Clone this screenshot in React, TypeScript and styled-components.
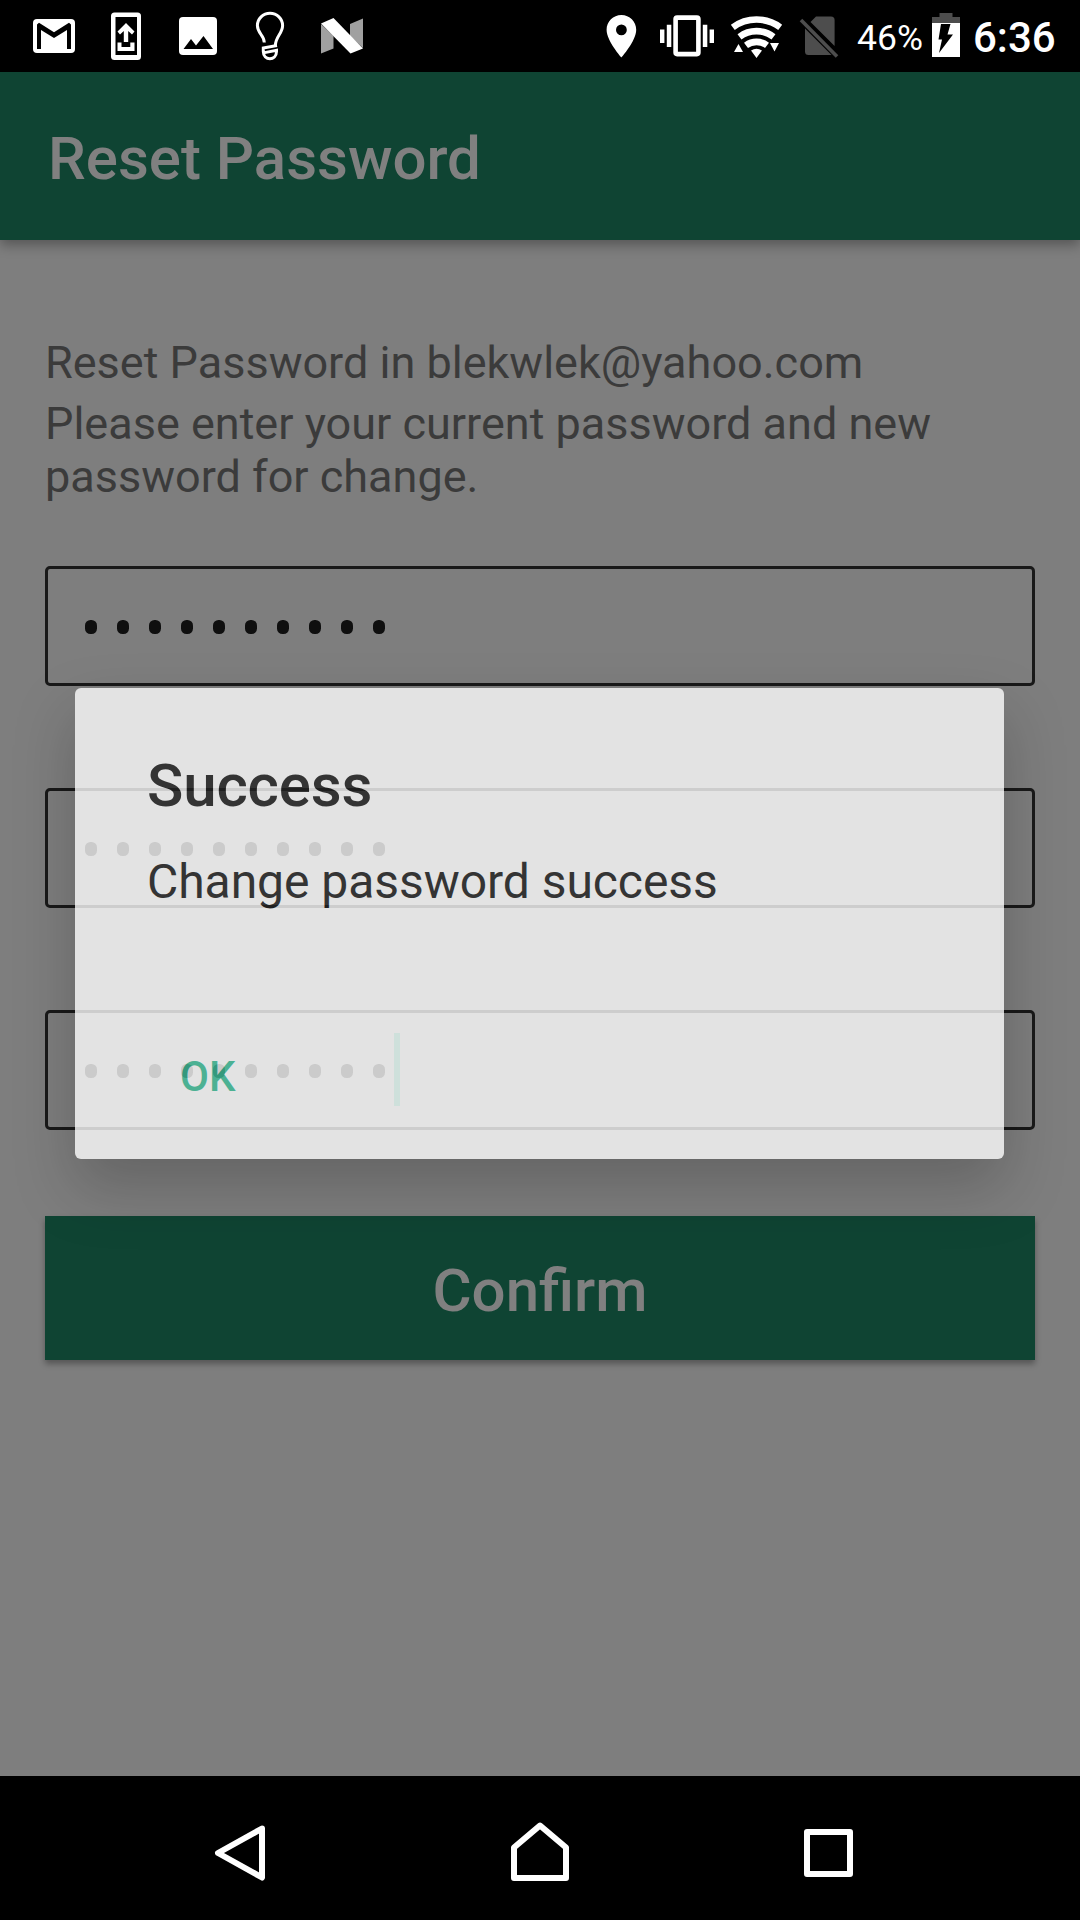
import React from "react";
import styled, { createGlobalStyle } from "styled-components";

const GlobalStyle = createGlobalStyle`
  * { box-sizing: border-box; }
  body { margin: 0; background: #000; }
`;

const Screen = styled.div`
  position: relative;
  display: flex;
  flex-direction: column;
  width: 1080px;
  height: 1920px;
  overflow: hidden;
  font-family: Roboto, "Liberation Sans", sans-serif;
  background: #7e7e7e;
`;

const StatusBar = styled.div`
  display: flex;
  align-items: flex-start;
  height: 72px;
  flex: none;
  background: #000;
  color: #fff;
`;

const Icon = styled.svg`
  display: block;
  flex: none;
`;

const BatteryText = styled.span`
  width: 74px;
  padding: 17px 0 0 1px;
  font-size: 35.5px;
  line-height: 42px;
`;

const Clock = styled.span`
  padding: 13px 0 0 11px;
  font-size: 42px;
  font-weight: 500;
  line-height: 50px;
`;

const AppBar = styled.header`
  display: flex;
  align-items: center;
  height: 168px;
  flex: none;
  padding: 6px 48px 0;
  background: #0f4433;
  box-shadow: 0 5px 12px rgba(0, 0, 0, 0.32);
`;

const Title = styled.h1`
  margin: 0;
  color: #808080;
  font-size: 60px;
  font-weight: 500;
  line-height: 70px;
`;

const Body = styled.main`
  display: flex;
  flex-direction: column;
  flex: 1;
  padding: 96px 45px 0;
`;

const Hint = styled.p`
  margin: 0 0 8px;
  color: #3b3b3b;
  font-size: 45px;
  line-height: 53px;
`;

const Fields = styled.div`
  display: flex;
  flex-direction: column;
  gap: 102px;
  margin-top: 55px;
`;

const Field = styled.div`
  display: flex;
  align-items: center;
  height: 120px;
  padding: 0 37px;
  border: 3px solid #191919;
  border-radius: 5px;
`;

const Secret = styled.div`
  display: flex;
  gap: 20px;
  margin-top: 2px;
`;

const Dot = styled.span`
  width: 12px;
  height: 14px;
  border-radius: 5.5px;
  background: #0f0f0f;
`;

const Caret = styled.span`
  width: 6px;
  height: 73px;
  margin: -1px 0 0 9px;
  background: #1f6f58;
`;

const Confirm = styled.button`
  height: 144px;
  margin-top: 86px;
  padding: 6px 0 0;
  border: 0;
  background: #0f4433;
  color: #808080;
  font: 500 60px/70px Roboto, "Liberation Sans", sans-serif;
  box-shadow: 0 4px 6px rgba(0, 0, 0, 0.32);
`;

const Dialog = styled.section`
  position: absolute;
  left: 75px;
  top: 688px;
  width: 929px;
  height: 471px;
  display: flex;
  flex-direction: column;
  align-items: flex-start;
  padding: 63px 72px 0;
  border-radius: 6px;
  background: #fff;
  color: #212121;
  opacity: 0.785;
  box-shadow: 0 28px 60px rgba(0, 0, 0, 0.25);
`;

const DialogTitle = styled.h2`
  margin: 0;
  font-size: 60px;
  font-weight: 500;
  line-height: 70px;
  letter-spacing: -0.15px;
`;

const Message = styled.p`
  margin: 33px 0 0;
  font-size: 48px;
  line-height: 56px;
  letter-spacing: -0.05px;
`;

const Action = styled.button`
  margin: 142px 0 0 33px;
  padding: 0;
  border: 0;
  background: none;
  color: #3fc09a;
  font: 500 42px/49px Roboto, "Liberation Sans", sans-serif;
`;

const NavBar = styled.nav`
  display: flex;
  height: 144px;
  flex: none;
  background: #000;
`;

const PasswordDots = () => (
  <Secret>
    {Array.from({ length: 10 }, (_, i) => (
      <Dot key={i} />
    ))}
  </Secret>
);

const NotificationIcons = () => (
  <Icon width="600" height="72" viewBox="0 0 600 72" fill="#fff">
    <rect x="33" y="19" width="42" height="34" rx="4" />
    <path fill="#000" d="M37 49V24.5L39 22.7L54 32.3L69 22.7L71 24.5V49H67V30L54 38L41 30V49Z" />
    <rect x="111" y="12.5" width="30" height="47.5" rx="3.5" />
    <rect x="115.5" y="17" width="21.5" height="38" fill="#000" />
    <path d="M126 23L134.5 31.5L132 34.5L128.2 31V42H123.8V31L120 34.5L117.5 31.5Z" />
    <path d="M117.5 42.5H121.5V47H130.3V42.5H134.5V51H117.5Z" />
    <rect x="179" y="17" width="38" height="38" rx="4" />
    <path fill="#000" d="M183.5 49L191 39L196 45.5L203.5 36L213 49Z" />
    <g fill="none" stroke="#fff" strokeWidth="3">
      <path d="M264.3 42.5C264.3 35 257.4 33.5 257.4 25.5A12.6 12.3 0 0 1 282.6 25.5C282.6 33.5 275.8 36 275.3 45.5" />
      <path d="M262 48.3L277 45.6M263.3 47V51.5C263.3 61 276.5 61 276.5 51.5V50.3L263.3 52.9" />
    </g>
    <path fill="#a0a0a0" d="M321 24L333.5 36V48.5L321 53.5ZM350 24L363 18.5V48L350 36Z" />
    <path d="M321 23.5L333.5 18L363 48.5L350.5 53.5Z" />
  </Icon>
);

const SystemIcons = () => (
  <Icon width="256" height="72" viewBox="600 0 256 72" fill="#fff">
    <path
      fillRule="evenodd"
      d="M621.4 15C613.2 15 606.6 21.6 606.6 29.8C606.6 41 621.4 57.6 621.4 57.6S636.2 41 636.2 29.8C636.2 21.6 629.6 15 621.4 15ZM621.4 35.3A5.4 5.4 0 1 1 621.4 24.5A5.4 5.4 0 0 1 621.4 35.3Z"
    />
    <rect x="675.6" y="17.6" width="22.8" height="36.5" rx="1.5" fill="none" stroke="#fff" strokeWidth="4.6" />
    <path d="M660 29.5H664.4V43H660ZM666.8 24.7H671.3V47H666.8ZM702.8 24.7H707.3V47H702.8ZM709.6 29.5H714V43H709.6Z" />
    <g fill="none" stroke="#fff" strokeWidth="6.6">
      <path d="M732.8 27.3A40 40 0 0 1 780.2 27.3" />
      <path d="M739.5 36.8A28.5 28.5 0 0 1 773.5 36.8" />
      <path d="M746 45.4A17.5 17.5 0 0 1 767 45.4" />
    </g>
    <path d="M751 50.5Q756.5 47 762 50.5L756.5 58ZM734 52H743L738.5 44ZM770 43H779L774.5 51.5Z" />
    <path fill="#4d4d4d" d="M810.5 22L816 16.5H831Q834.6 16.5 834.6 20V46ZM805 28.5L831.5 55H808.5Q805 55 805 51.5Z" />
    <path d="M801 20L837 56.5" stroke="#4d4d4d" strokeWidth="3.6" />
  </Icon>
);

const Battery = () => (
  <Icon width="32" height="72" viewBox="930 0 32 72">
    <path fill="#4d4d4d" d="M939.5 13H952.5V17H960V23H932V17H939.5Z" />
    <rect x="932" y="23" width="28" height="34" fill="#fff" />
    <path fill="#000" d="M941 24H950.5L947.5 34.5H953L939 53L942 39.5H938.5Z" />
  </Icon>
);

const NavIcons = () => (
  <Icon width="1080" height="144" viewBox="0 0 1080 144" fill="none" stroke="#fff" strokeWidth="6" strokeLinejoin="round">
    <path d="M262 52.5L218 77L262 101.5Z" />
    <path d="M514 102V71.5L540 49.5L566 71.5V102Z" />
    <rect x="807" y="56" width="43" height="42" />
  </Icon>
);

export default function App() {
  return (
    <Screen>
      <GlobalStyle />
      <StatusBar>
        <NotificationIcons />
        <SystemIcons />
        <BatteryText>46%</BatteryText>
        <Battery />
        <Clock>6:36</Clock>
      </StatusBar>
      <AppBar>
        <Title>Reset Password</Title>
      </AppBar>
      <Body>
        <Hint>Reset Password in blekwlek@yahoo.com</Hint>
        <Hint>Please enter your current password and new password for change.</Hint>
        <Fields>
          <Field><PasswordDots /></Field>
          <Field><PasswordDots /></Field>
          <Field><PasswordDots /><Caret /></Field>
        </Fields>
        <Confirm>Confirm</Confirm>
      </Body>
      <NavBar>
        <NavIcons />
      </NavBar>
      <Dialog role="dialog">
        <DialogTitle>Success</DialogTitle>
        <Message>Change password success</Message>
        <Action>OK</Action>
      </Dialog>
    </Screen>
  );
}
